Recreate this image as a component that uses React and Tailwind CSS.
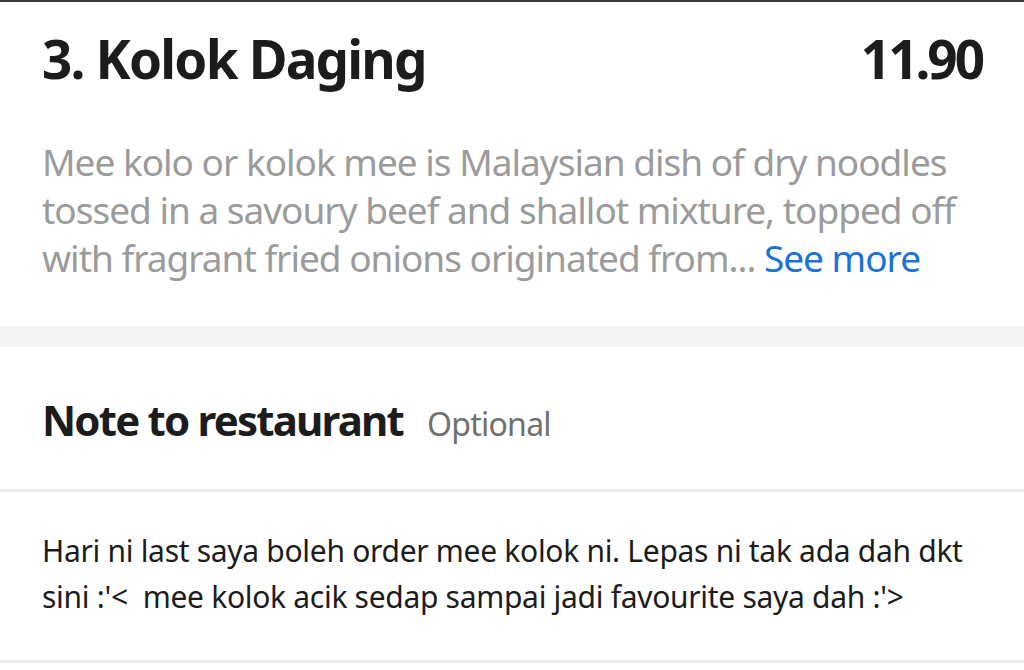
export default function App() {
    return (
        <div className="w-[1024px] h-[670px] overflow-hidden bg-white" style={{ fontFamily: '"Noto Sans", "Open Sans", sans-serif' }}>
            <div className="h-[2px] bg-[#3a3a3a]" />
            <div className="px-[42px] pt-[25px]">
                <div className="flex items-start justify-between">
                    <h1 className="text-[53px] leading-[64px] font-bold text-[#1c1c1c] tracking-[-1.8px]">3. Kolok Daging</h1>
                    <span className="text-[53px] leading-[64px] font-bold text-[#1c1c1c] tracking-[-3px]">11.90</span>
                </div>
                <p className="mt-[47px] text-[37px] leading-[48px] text-[#9b9b9b] tracking-[-1px]">
                    Mee kolo or kolok mee is Malaysian dish of dry noodles tossed in a savoury beef and shallot mixture, topped off with fragrant fried onions originated from... <span className="text-[#1b72d8]">See more</span>
                </p>
            </div>
            <div className="mt-[44px] h-[21px] bg-[#f4f4f4]" />
            <div className="px-[42px] pt-[45px] pb-[41px] flex items-baseline gap-[24px] border-b-[3px] border-[#ebebeb]">
                <h2 className="text-[42px] leading-[56px] font-bold text-[#1c1c1c] tracking-[-1.8px]">Note to restaurant</h2>
                <span className="text-[32px] text-[#707070] tracking-[-0.75px]">Optional</span>
            </div>
            <div className="px-[42px] pt-[36px] pb-[40px] border-b-[3px] border-[#ebebeb]">
                <p className="text-[30px] leading-[46px] text-[#1c1c1c] tracking-[-0.3px]">
                    Hari ni last saya boleh order mee kolok ni. Lepas ni tak ada dah dkt sini :'&lt;&nbsp; mee kolok acik sedap sampai jadi favourite saya dah :'&gt;
                </p>
            </div>
        </div>
    )
}
